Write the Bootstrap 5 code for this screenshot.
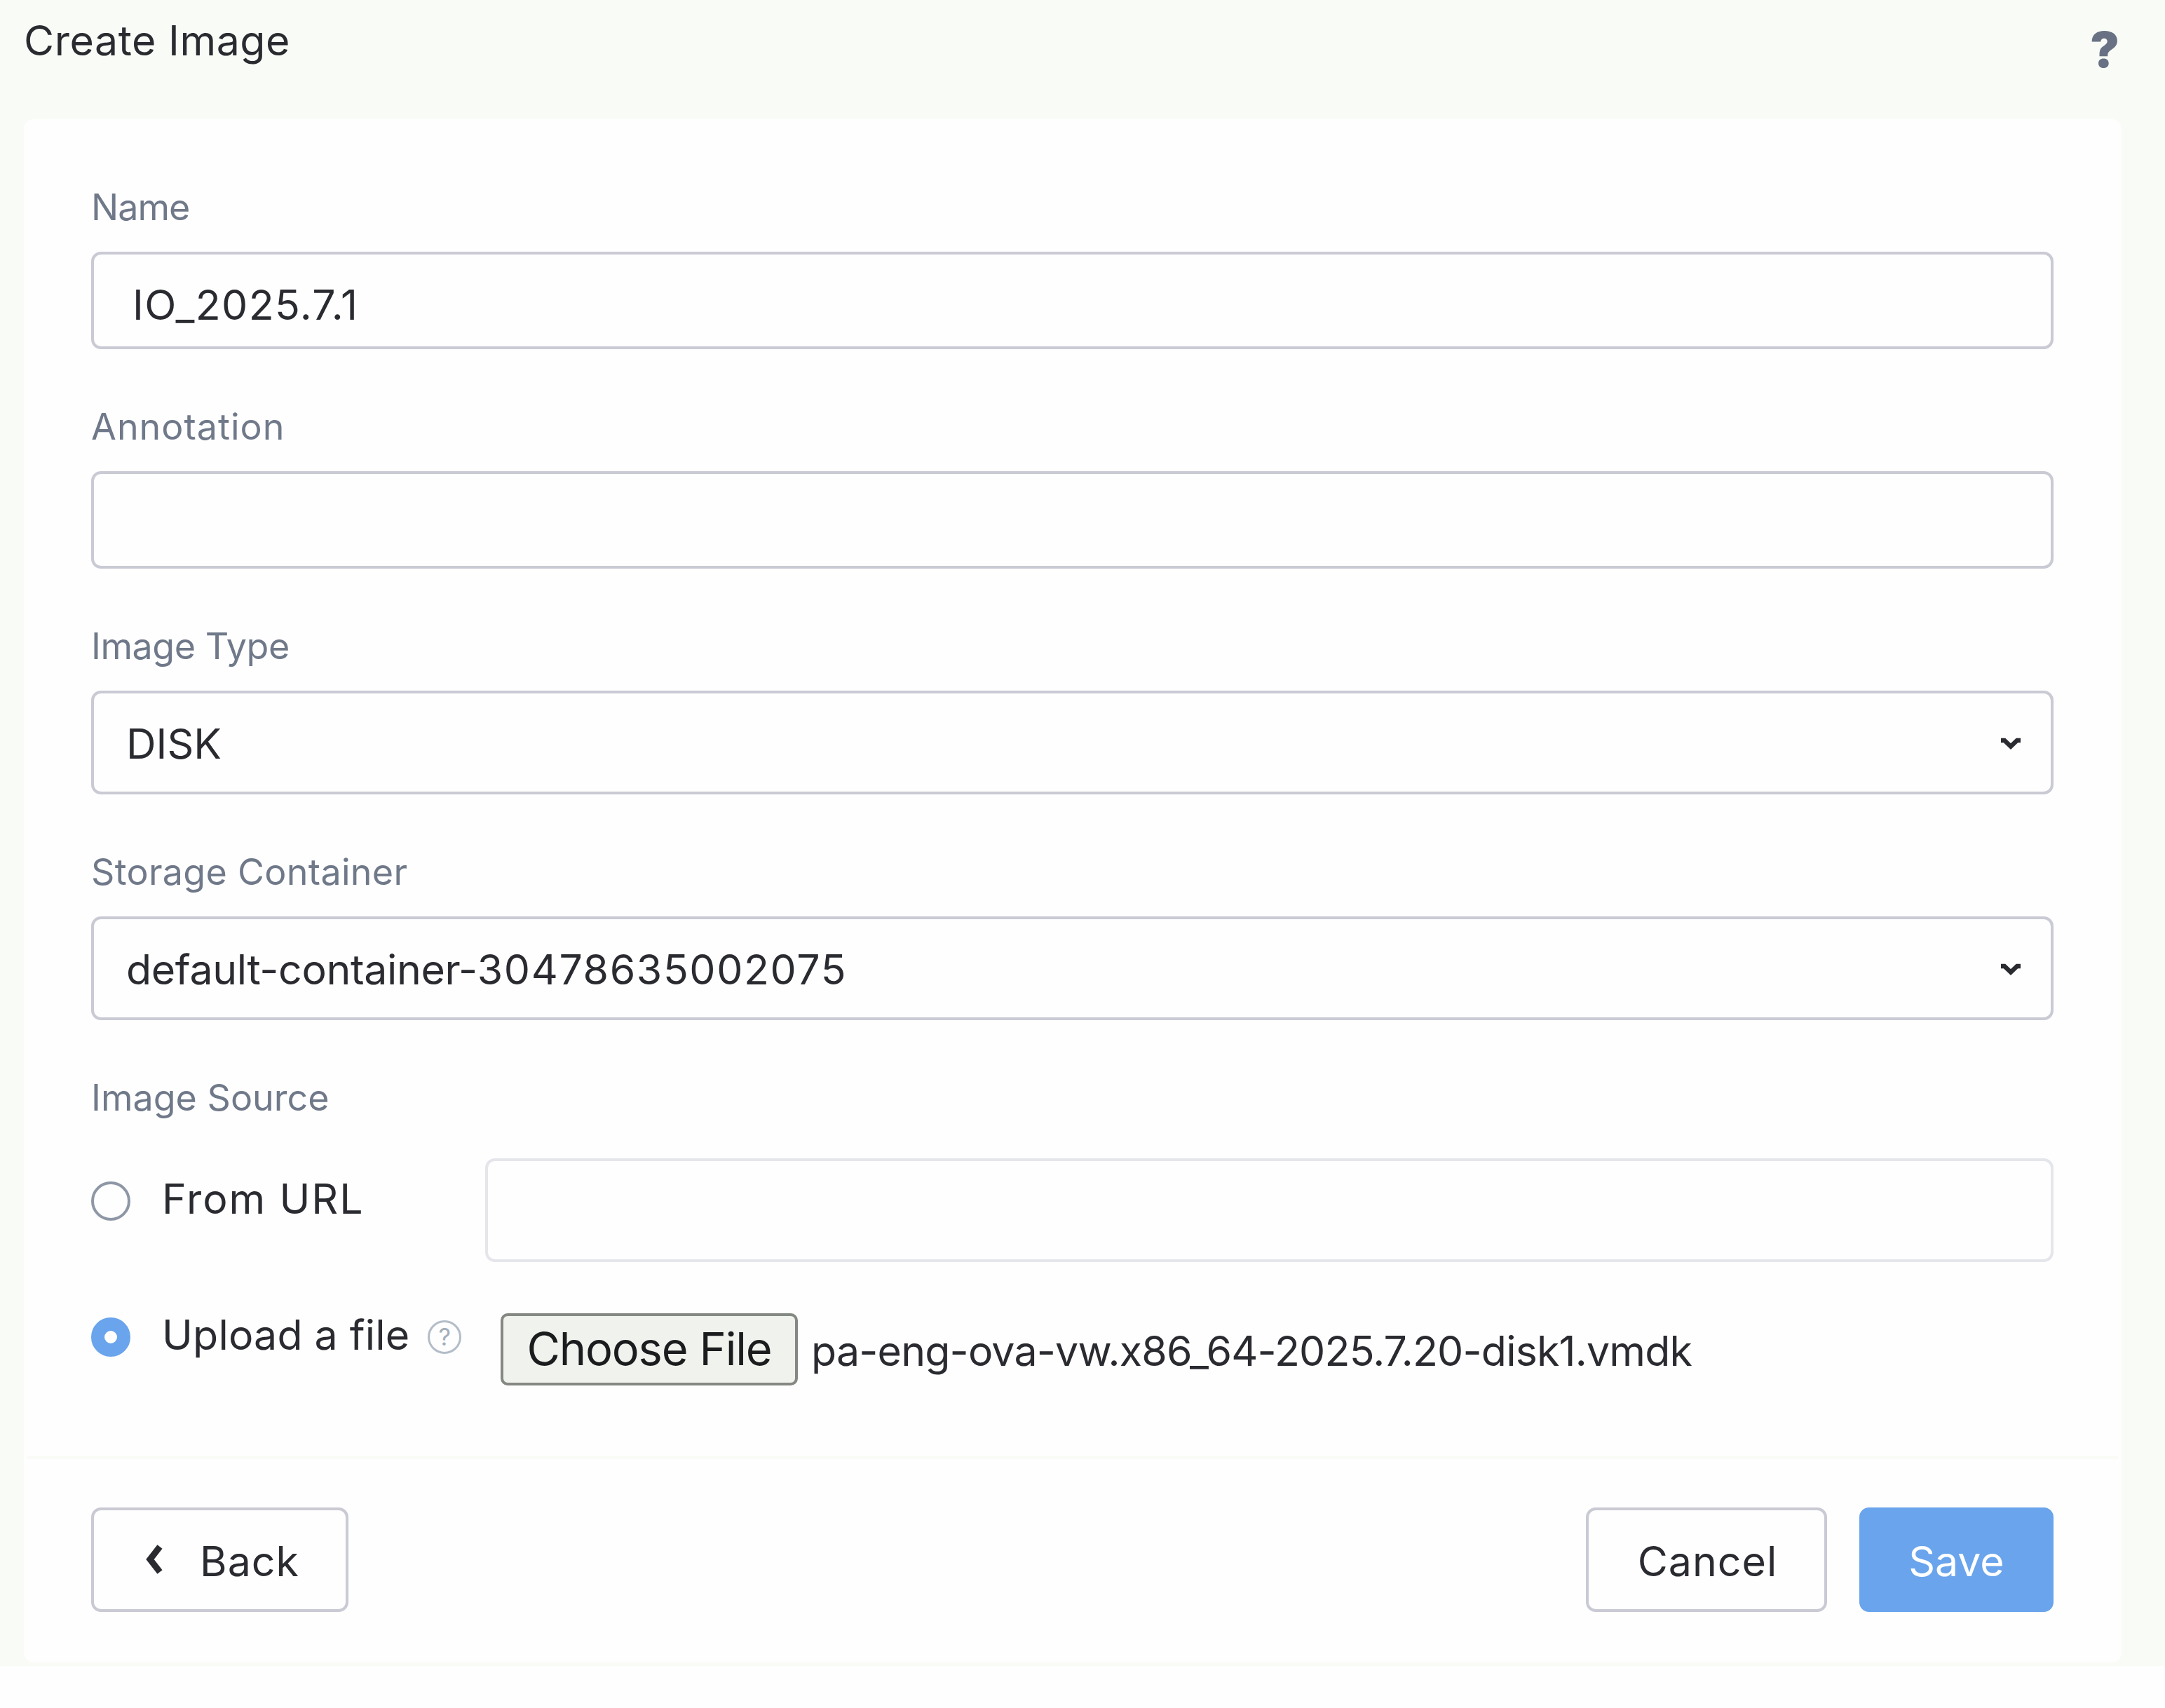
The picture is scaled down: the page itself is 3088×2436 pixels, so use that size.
<!DOCTYPE html>
<html lang="en">
<head>
<meta charset="utf-8">
<meta name="viewport" content="width=device-width, initial-scale=1">
<title>Create Image</title>
<link rel="stylesheet" href="https://cdn.jsdelivr.net/npm/bootstrap@5.3.0/dist/css/bootstrap.min.css">
<style>
  :root { --ink: #2a2b30; --muted: #707989; --line: #c9cad4; --canvas: #f9fbf6; --blue: #69a4ec; }
  body { font-family: Inter, "Open Sans", sans-serif; font-size: 59px; line-height: 70px; color: var(--ink); background: #fefefe; }
  .dialog { background: var(--canvas); height: 2376px; padding: 0 62px 0 34px; }
  .dialog-head { height: 170px; padding: 22.5px 3px 0 0; }
  .dialog-title { font-size: 59px; line-height: 70px; font-weight: 400; letter-spacing: .55px; }
  .help-link { font-size: 70px; line-height: 70px; font-weight: 900; color: #687284; margin-top: 13px; }
  .panel { height: 2201px; background: #fefefe; border: 0; border-radius: 14px; }
  .panel-body { height: 1907px; padding: 96px 97px 0 96px; }
  .field { margin-bottom: 81px; }
  .form-label { font-size: 52px; line-height: 60px; color: var(--muted); margin-bottom: 33px; }
  .form-control, .select-box { border: 4px solid var(--line); border-radius: 14px; background: #fefefe; color: var(--ink); font-size: 59px; line-height: 70px; }
  .form-control { height: 139px; padding: 12px 55px 0; }
  .select-box { height: 148px; padding: 3px 41px 0 46px; }
  .select-box svg { width: 32px; height: 20px; margin-top: 1px; }
  .url-control { height: 148px; border-color: #e5e6eb; }
  .source-label { margin-bottom: 56px; }
  .option { width: 562px; flex: none; }
  .form-check-input.source-radio { width: 56px; height: 56px; margin: 0; border: 4px solid #8e97a5; background-color: #fefefe; background-image: none; }
  .form-check-input.source-radio:checked { border: 19px solid var(--blue); }
  .option-text { margin-left: 45px; }
  .hint { width: 48px; height: 48px; border: 3px solid #b3bdc8; border-radius: 50%; color: #a2aebb; font-size: 34px; line-height: 42px; margin-left: 26px; }
  .choose-btn { height: 103px; width: 424px; border: 4px solid #858983; border-radius: 10px; background: #f0f2ed; color: #1b1c1e; font-size: 65px; line-height: 70px; letter-spacing: -1.2px; padding: 0 0 1px; }
  .file-name { margin-left: 19px; padding-top: 4px; letter-spacing: -.8px; }
  .panel-foot { height: 294px; border-top: 4px solid var(--canvas); margin: 0 5px; padding: 69px 92px 0 91px; }
  .action { height: 149px; border: 4px solid var(--line); border-radius: 14px; font-size: 59px; line-height: 70px; padding: 4px 0 0; color: var(--ink); background: #fefefe; }
  .action-back { width: 367px; letter-spacing: 1px; }
  .action-back svg { width: 26px; height: 42px; margin: -5px 53px 0 6px; }
  .action-cancel { width: 344px; letter-spacing: 1px; padding-left: 3px; }
  .action-save { width: 277px; background: var(--blue); border-color: var(--blue); color: #fff; }
</style>
</head>
<body>
<main class="dialog">
  <header class="dialog-head d-flex justify-content-between align-items-start">
    <h1 class="dialog-title m-0">Create Image</h1>
    <a class="help-link text-decoration-none" href="#" aria-label="Help">?</a>
  </header>

  <form class="panel card">
    <div class="panel-body">
      <div class="field">
        <label class="form-label d-block" for="name" style="letter-spacing:-1px">Name</label>
        <input class="form-control" id="name" type="text" value="IO_2025.7.1" style="letter-spacing:1.4px">
      </div>
      <div class="field">
        <label class="form-label d-block" for="annotation" style="letter-spacing:1px">Annotation</label>
        <input class="form-control" id="annotation" type="text">
      </div>
      <div class="field">
        <label class="form-label d-block" style="letter-spacing:-.45px">Image Type</label>
        <div class="select-box d-flex align-items-center justify-content-between" role="combobox">
          <span>DISK</span>
          <svg viewBox="0 0 32 20" fill="none" stroke="#2a2b30" stroke-width="6.5"><path d="M2 5H7L16 13.5L25 5H30"/></svg>
        </div>
      </div>
      <div class="field mb-0">
        <label class="form-label d-block" style="letter-spacing:.3px">Storage Container</label>
        <div class="select-box d-flex align-items-center justify-content-between" role="combobox">
          <span><span style="letter-spacing:-.35px">default-container-</span><span style="letter-spacing:1.6px">30478635002075</span></span>
          <svg viewBox="0 0 32 20" fill="none" stroke="#2a2b30" stroke-width="6.5"><path d="M2 5H7L16 13.5L25 5H30"/></svg>
        </div>
      </div>

      <div class="form-label source-label" style="margin-top:81px">Image Source</div>
      <div class="d-flex align-items-start">
        <label class="option d-flex align-items-center" style="padding-top:28px">
          <input class="form-check-input source-radio" type="radio" name="source">
          <span class="option-text" style="letter-spacing:1.9px;margin-top:-5px">From URL</span>
        </label>
        <input class="form-control url-control" type="text">
      </div>
      <div class="d-flex align-items-start" style="margin-top:73px">
        <label class="option d-flex align-items-center" style="width:584px;margin-top:1px">
          <input class="form-check-input source-radio" type="radio" name="source" checked>
          <span class="option-text" style="letter-spacing:.2px;margin-top:-5px">Upload a file</span>
          <span class="hint text-center">?</span>
        </label>
        <button class="choose-btn flex-shrink-0" type="button">Choose File</button>
        <span class="file-name align-self-center text-nowrap">pa-eng-ova-vw.x86_64-2025.7.20-disk1.vmdk</span>
      </div>
    </div>

    <footer class="panel-foot d-flex justify-content-between">
      <button class="btn action action-back d-flex align-items-center justify-content-center" type="button">
        <svg viewBox="0 0 26 42" fill="none" stroke="#2a2b30" stroke-width="9"><path d="M22 3L8 21L22 39"/></svg>
        <span>Back</span>
      </button>
      <div class="d-flex" style="gap:46px">
        <button class="btn action action-cancel" type="button">Cancel</button>
        <button class="btn action action-save" type="button">Save</button>
      </div>
    </footer>
  </form>
</main>
<script src="https://cdn.jsdelivr.net/npm/bootstrap@5.3.0/dist/js/bootstrap.bundle.min.js"></script>
</body>
</html>
